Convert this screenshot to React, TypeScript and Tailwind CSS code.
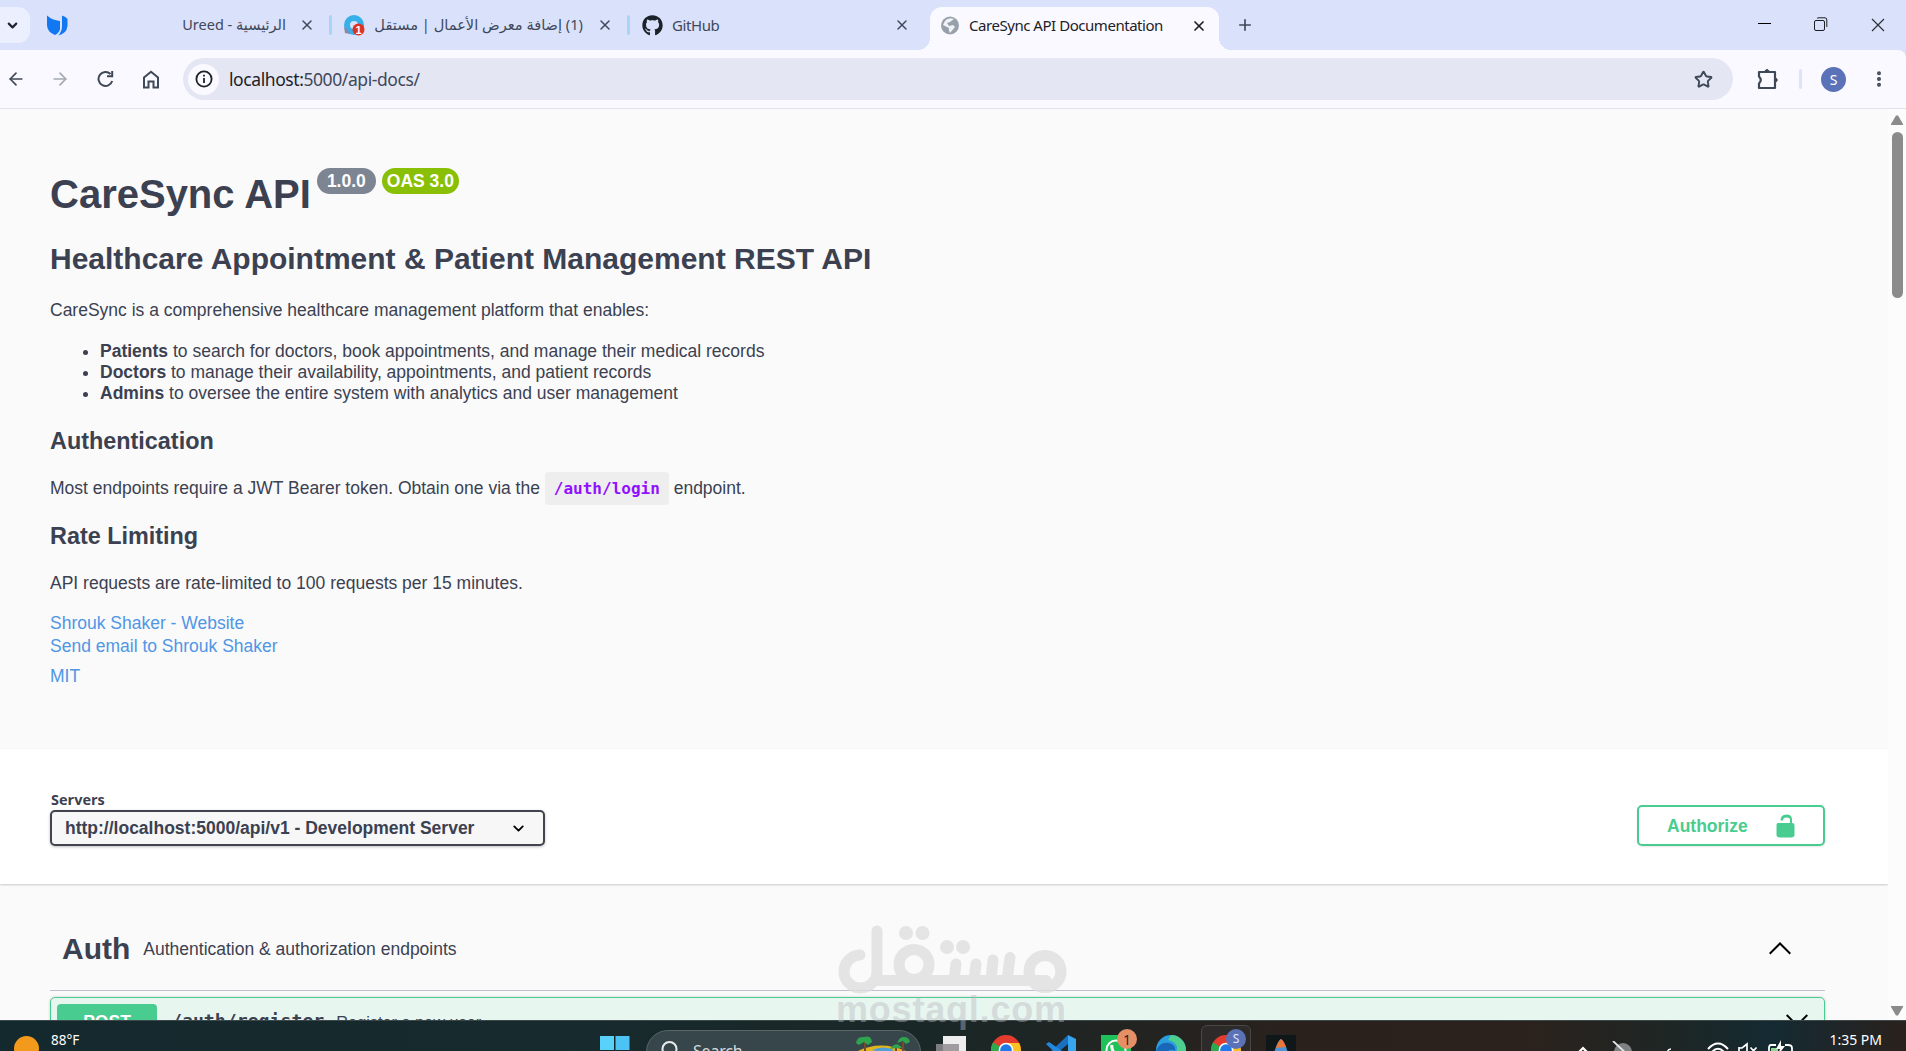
import { ReactNode } from "react";
import { FaGithub } from "react-icons/fa";
import {
  ArrowLeft,
  ArrowRight,
  ChevronDown,
  EllipsisVertical,
  Plus,
  Star,
  X,
} from "lucide-react";

const links = ["Shrouk Shaker - Website", "Send email to Shrouk Shaker"];

const features = [
  {
    role: "Patients",
    text: "to search for doctors, book appointments, and manage their medical records",
  },
  {
    role: "Doctors",
    text: "to manage their availability, appointments, and patient records",
  },
  {
    role: "Admins",
    text: "to oversee the entire system with analytics and user management",
  },
];

function TabDivider() {
  return <span className="h-5 w-[3px] rounded-full bg-[#a8d5f7]" />;
}

function TabStrip() {
  return (
    <div className="flex h-[50px] bg-[#dae1fa] font-['Noto_Sans','DejaVu_Sans',sans-serif] text-[15px] text-[#40485a]">
      <div className="mt-[7px] flex h-[36px] w-[30px] items-center rounded-r-xl bg-[#eceffd] pl-[5px]">
        <ChevronDown size={15} strokeWidth={3.4} className="text-[#1c2530]" />
      </div>
      <div className="flex h-[50px] w-[299px] items-center pl-[17px]">
        <svg width="21" height="21" viewBox="0 0 21 21">
          <path d="M0 0.500 Q5 5 13 6 V14 Q12 18 8 20 Q0 17 0 10Z" fill="#1178f2" />
          <path d="M15 0.500 Q19 1.500 20.500 4 V11 Q19.500 19 11 20.500 Q15 17 15 11Z" fill="#1178f2" />
        </svg>
        <p dir="rtl" className="ml-auto text-[14.500px] whitespace-nowrap">
          الرئيسية - Ureed
        </p>
        <X size={16} strokeWidth={2.2} className="mr-[14px] ml-[13px]" />
      </div>
      <div className="flex h-[50px] w-[298px] items-center">
        <TabDivider />
        <svg width="21" height="21" viewBox="0 0 21 21" className="ml-[12px]">
          <circle cx="10" cy="10" r="7" fill="none" stroke="#35b0e8" strokeWidth="6" />
          <path d="M0 12 L3 14 L6 19 L1 18Z" fill="#8d86a8" />
          <circle cx="14.500" cy="14.500" r="6" fill="#dd3325" />
          <text x="14.500" y="18.500" textAnchor="middle" fontSize="11" fontWeight="700" fill="#fff" fontFamily="Liberation Sans">1</text>
        </svg>
        <p dir="rtl" className="ml-auto text-[14.600px] whitespace-nowrap">
          (1) إضافة معرض الأعمال | مستقل
        </p>
        <X size={16} strokeWidth={2.2} className="mr-[14px] ml-[14px]" />
      </div>
      <div className="flex h-[50px] w-[303px] items-center">
        <TabDivider />
        <FaGithub size={21} className="ml-[12px] text-[#1b2229]" />
        <span className="ml-[9px] tracking-[-0.4px]">GitHub</span>
        <X size={16} strokeWidth={2.2} className="mr-[20px] ml-auto" />
      </div>
      <div className="relative mt-[7px] flex h-[43px] w-[289px] items-center rounded-t-xl bg-[#faf9ff] pb-[6px] text-[#1c2128]">
        <svg width="18" height="19" viewBox="0 0 18 19" className="ml-[11px]">
          <circle cx="9" cy="9.500" r="9" fill="#98a1ab" />
          <path d="M4 5 Q7 1 13 3 L9 6 L6 7 L8 10 L12 9 L14 11 L9 17 Q7 14 8 12 L2 9Z" fill="#f0f2f6" />
        </svg>
        <span className="ml-[10px] tracking-[-0.460px] whitespace-nowrap">CareSync API Documentation</span>
        <X size={16} strokeWidth={2.6} className="mr-[12px] ml-auto" />
        <span className="absolute bottom-0 -left-3 size-3 bg-[radial-gradient(circle_at_0_0,#dae1fa_12px,#faf9ff_12px)]" />
        <span className="absolute -right-3 bottom-0 size-3 bg-[radial-gradient(circle_at_100%_0,#dae1fa_12px,#faf9ff_12px)]" />
      </div>
      <Plus size={18} strokeWidth={2.2} className="mt-[16px] ml-[17px]" />
      <div className="ml-auto flex items-start pt-[17px] pr-[21px] text-black">
        <span className="mt-[6px] h-px w-[13px] bg-black" />
        <svg width="14" height="14" viewBox="0 0 14 14" className="ml-[43px]" fill="none" stroke="#1b1f24">
          <rect x="0.500" y="3.500" width="10" height="10" rx="1.500" />
          <path d="M3 1.500 Q3.500 0.800 5 0.800 H11 Q12.800 0.800 12.800 3 V10" />
        </svg>
        <svg width="14" height="14" viewBox="0 0 14 14" className="mt-px ml-[43px]" stroke="#2b3138" strokeWidth="1.200">
          <path d="M1 1 L13 13 M13 1 L1 13" />
        </svg>
      </div>
    </div>
  );
}

function AddressBar() {
  return (
    <div className="bg-[#dae1fa]">
      <div className="flex h-[59px] items-center rounded-tr-lg border-b border-[#e1e2ea] bg-[#faf9ff] text-[#3f4856]">
        <ArrowLeft size={20} strokeWidth={2} className="ml-[6px]" />
        <ArrowRight size={20} strokeWidth={2} className="ml-[24px] text-[#a3a8b1]" />
        <svg width="18" height="18" viewBox="0 0 18 18" className="ml-[27px]" fill="none" stroke="currentColor" strokeWidth="2">
          <path d="M15.200 11 A7 7 0 1 1 13.500 4 M15.200 1 V6.300 H10" />
        </svg>
        <svg width="18" height="19" viewBox="0 0 18 19" className="ml-[27px]" fill="none" stroke="currentColor" strokeWidth="2">
          <path d="M2 7.500 L9 1.800 L16 7.500 V17.500 H11.500 V11.500 H6.500 V17.500 H2Z" />
        </svg>
        <div className="ml-[23px] flex h-[42px] w-[1550px] items-center rounded-full bg-[#e4e7f3] pr-[20px] pl-[5px]">
          <span className="flex size-[31px] items-center justify-center rounded-full bg-[#faf9ff]">
            <svg width="18" height="18" viewBox="0 0 18 18" fill="none" stroke="#1c2128" strokeWidth="1.800">
              <circle cx="9" cy="9" r="7.600" />
              <path d="M9 8 V13 M9 4.700 V6.500" />
            </svg>
          </span>
          <span className="ml-[10px] font-['Noto_Sans',sans-serif] text-[17.500px] tracking-[-0.42px] text-[#40485a]">
            <span className="text-[#1c2128]">localhost:</span>5000/api-docs/
          </span>
          <Star size={19} strokeWidth={2.4} strokeLinejoin="miter" className="ml-auto" />
        </div>
        <svg width="22" height="22" viewBox="0 0 22 22" className="ml-[24px]" fill="none" stroke="currentColor" strokeWidth="2.200">
          <path d="M2 4 H18 V20 H2 V15.500 Q5.500 12 2 8.500Z" strokeLinejoin="round" />
          <path d="M7.500 3.500 Q10 -0.500 12.500 3.500Z M18.500 9.500 Q22 12 18.500 14.500Z" fill="currentColor" strokeWidth="1" />
        </svg>
        <span className="ml-[20px] h-5 w-[3px] rounded-full bg-[#dae4fb]" />
        <span className="ml-[19px] flex size-[25px] items-center justify-center rounded-full bg-[#5b72b9] font-['Noto_Sans',sans-serif] text-[14px] text-white">
          S
        </span>
        <EllipsisVertical size={20} strokeWidth={2.8} className="ml-[23px]" />
      </div>
    </div>
  );
}

function SectionHeading({ children }: { children: ReactNode }) {
  return <h3 className="text-[23.400px] leading-[28px] font-bold">{children}</h3>;
}

function Info() {
  return (
    <section className="h-[640px] px-[50px] pt-[62px] text-[17.500px] leading-[21px]">
      <div className="flex h-[46px]">
        <h1 className="text-[40px] leading-[46px] font-bold whitespace-nowrap">CareSync API</h1>
        <span className="-mt-[3px] ml-[6px] flex h-[26px] w-[59px] items-center justify-center rounded-full bg-[#7d8492] text-[17.500px] font-bold text-white">
          1.0.0
        </span>
        <span className="-mt-[3px] ml-[6px] flex h-[26px] w-[77px] items-center justify-center rounded-full bg-[#89bf04] text-[17.500px] font-bold text-white">
          OAS 3.0
        </span>
      </div>
      <h2 className="mt-[25px] text-[30px] leading-[34px] font-bold">
        Healthcare Appointment &amp; Patient Management REST API
      </h2>
      <p className="mt-[24px]">
        CareSync is a comprehensive healthcare management platform that enables:
      </p>
      <ul className="mt-[20px] mb-[23px] list-disc pl-[50px]">
        {features.map(({ role, text }) => (
          <li key={role}>
            <strong>{role}</strong> {text}
          </li>
        ))}
      </ul>
      <SectionHeading>Authentication</SectionHeading>
      <p className="mt-[23px] mb-[23px]">
        Most endpoints require a JWT Bearer token. Obtain one via the{" "}
        <code className="rounded bg-[#eeeeee] px-[9px] py-[7px] font-['DejaVu_Sans_Mono',monospace] text-[16px] font-bold text-[#9012fe]">
          /auth/login
        </code>{" "}
        endpoint.
      </p>
      <SectionHeading>Rate Limiting</SectionHeading>
      <p className="mt-[23px]">API requests are rate-limited to 100 requests per 15 minutes.</p>
      <div className="mt-[18px] leading-[23px] text-[#5096e4]">
        {links.map((link) => (
          <a key={link} className="block">
            {link}
          </a>
        ))}
        <a className="mt-[7px] block">MIT</a>
      </div>
    </section>
  );
}

function Servers() {
  return (
    <section className="flex h-[135px] justify-between bg-white pr-[63px] pl-[50px] shadow-[0_1px_2px_rgba(0,0,0,0.2)]">
      <div className="pt-[41px]">
        <p className="h-[20px] pl-px font-['Open_Sans',sans-serif] text-[14.500px] leading-[20px] font-bold">Servers</p>
        <div className="flex h-[36px] w-[495px] items-center rounded-[5px] border-2 border-[#41444e] bg-[#f7f7f7] pr-[16px] pl-[13px] text-[17.500px] font-bold shadow-[0_1px_3px_rgba(0,0,0,0.25)]">
          http://localhost:5000/api/v1 - Development Server
          <ChevronDown size={17} strokeWidth={2.6} className="ml-auto text-black" />
        </div>
      </div>
      <button className="mt-[56px] flex h-[41px] w-[188px] items-center rounded-[5px] border-2 border-[#49cc90] pl-[28px] text-[17.500px] font-bold text-[#49cc90] shadow-[0_1px_2px_rgba(0,0,0,0.1)]">
        <span className="pt-px">Authorize</span>
        <svg width="19" height="24" viewBox="0 0 19 24" className="ml-[28px]" fill="#49cc90">
          <path d="M2 9 H14 V5.500 Q14 3.500 10.500 3.500 Q7 3.500 7 6.500 H4.500 Q4.500 0.500 10.500 0.500 Q16 0.500 16 5.500 V9 Q18.500 9 18.500 11 V21 Q18.500 23 15 23.500 H4 Q0.500 23 0.500 21 V11 Q0.500 9 2 9Z" />
        </svg>
      </button>
    </section>
  );
}

function Operations() {
  return (
    <section className="pr-[63px] pl-[50px]">
      <div className="flex h-[107px] items-center border-b border-[#c0c0cb] pt-[22px] pr-[34px] pl-[12px]">
        <h3 className="text-[30px] font-bold">Auth</h3>
        <p className="ml-[13px] pt-[2px] text-[17.500px]">Authentication &amp; authorization endpoints</p>
        <svg width="22" height="13" viewBox="0 0 22 13" className="ml-auto" fill="none" stroke="#000" strokeWidth="2">
          <path d="M0.700 11.700 L11 1.500 L21.300 11.700" />
        </svg>
      </div>
      <div className="mt-[6px] flex h-[50px] items-start rounded-[5px] border border-[#49cc90] bg-[#e8f6f0] px-[6px] pt-[6px] shadow-[0_0_3px_rgba(0,0,0,0.19)]">
        <span className="flex h-[38px] w-[100px] items-center justify-center rounded-[4px] bg-[#49cc90] pb-[2px] text-[17.500px] font-bold text-white">
          POST
        </span>
        <span className="ml-[14px] font-['DejaVu_Sans_Mono',monospace] text-[18.200px] leading-[34px] font-bold">/auth/register</span>
        <span className="ml-[12px] text-[16.300px] leading-[36px]">Register a new user</span>
        <svg width="22" height="13" viewBox="0 0 22 13" className="mt-[10px] mr-[10px] ml-auto" fill="none" stroke="#000" strokeWidth="2">
          <path d="M0.700 1 L11 11.300 L21.300 1" />
        </svg>
      </div>
    </section>
  );
}

function Watermark() {
  return (
    <svg width="232" height="110" viewBox="0 0 232 110" className="absolute top-[923px] left-[836px] z-10 opacity-80">
      <g fill="none" stroke="#dfdfdf" strokeWidth="11" strokeLinecap="round" strokeLinejoin="round">
        <path d="M24 32 A16.500 16.500 0 1 0 41 49 V8 M41 57.500 H210" />
        <circle cx="78" cy="41.500" r="15" />
        <circle cx="209" cy="48.500" r="16" />
        <path d="M120 41 L118 57 M140 41 L138 57 M157 37 L155 57 M174 34.500 L171 57" />
      </g>
      <g fill="#dfdfdf">
        <circle cx="70" cy="10" r="7" />
        <circle cx="86.500" cy="10" r="7" />
        <circle cx="111" cy="24" r="7" />
        <circle cx="127" cy="24" r="7" />
      </g>
      <text x="0" y="99" textLength="230" fontSize="36" fontWeight="700" fontFamily="Liberation Sans" fill="#b9b9c2" fillOpacity="0.55">
        mostaql.com
      </text>
    </svg>
  );
}

function ChromeIcon() {
  return (
    <svg width="30" height="30" viewBox="0 0 30 30">
      <circle cx="15" cy="15" r="15" fill="#e33b2e" />
      <path d="M15 15 L2 7.500 A15 15 0 0 0 15 30Z" fill="#2da94f" />
      <path d="M15 15 V8 H28.200 A15 15 0 0 1 15 30Z" fill="#f9c31f" />
      <circle cx="15" cy="15" r="7.300" fill="#fff" />
      <circle cx="15" cy="15" r="5.800" fill="#2079e8" />
    </svg>
  );
}

function Taskbar() {
  return (
    <footer className="flex h-[31px] items-start overflow-hidden border-t border-[#3c484a] bg-[linear-gradient(90deg,#14292e_0,#172a2d_30%,#1a2726_50%,#2a211d_68%,#2b221d_80%,#1d2625_88%,#142a32_93%,#2a211d_100%)] font-['Noto_Sans',sans-serif] text-white">
      <svg width="25" height="25" viewBox="0 0 25 25" className="mt-[15px] ml-[14px]">
        <circle cx="12.500" cy="12.500" r="12.500" fill="#f39a1c" />
      </svg>
      <span className="mt-[10px] ml-[12px] w-[40px] text-[13.500px] leading-[18px]">88°F</span>
      <svg width="30" height="30" viewBox="0 0 30 30" className="mt-[15px] ml-[509px]" fill="#58d2fa">
        <path d="M0 0 H14 V14 H0Z" />
        <path d="M15.500 0 H29.500 V14 H15.500Z" fill="#4cc2f5" />
      </svg>
      <div className="mt-[9px] ml-[16px] flex h-[46px] w-[275px] rounded-[22px] border border-[#5a6668] bg-[#36464b]">
        <svg width="17" height="17" viewBox="0 0 17 17" className="mt-[10px] ml-[14px]" fill="none" stroke="#e9eced" strokeWidth="2">
          <circle cx="8.500" cy="8" r="7" />
        </svg>
        <span className="mt-[8px] ml-[15px] text-[16px] leading-[24px] tracking-[-0.2px] text-[#d4d9da]">Search</span>
        <svg width="60" height="30" viewBox="0 0 60 30" className="mt-[5px] ml-auto mr-[6px]">
          <path d="M2 16 Q28 2 58 18 V30 H2Z" fill="#e2b520" />
          <path d="M18 14 Q30 9 40 14 Q34 18 18 14Z" fill="#4d9fd6" />
          <path d="M11 6 V18 M49 6 V18 M42 12 V20" stroke="#7a4a28" strokeWidth="2" />
          <path d="M2 7 Q3 0 10 1 Q17 -1 18 6 L14 9 L10 6 L5 9Z M43 7 Q46 0 50 1 Q55 1 56 6 L52 8 L49 5Z M36 13 Q42 4 48 12 L42 12Z" fill="#2fa34d" />
        </svg>
      </div>
      <svg width="30" height="20" viewBox="0 0 30 20" className="mt-[15px] ml-[15px]">
        <path d="M7 0 H30 V20 H7Z" fill="#ededee" />
        <path d="M0 8 H23 V20 H0Z" fill="#8f8d90" fillOpacity="0.85" />
      </svg>
      <div className="mt-[14px] ml-[25px]">
        <ChromeIcon />
      </div>
      <svg width="30" height="30" viewBox="0 0 30 30" className="mt-[14px] ml-[25px]">
        <path d="M22 0 L30 4 V26 L22 30Z" fill="#37a6ee" />
        <path d="M22 0 V9 L4 24 L0 21Z" fill="#1a70c0" />
        <path d="M0 9 L3 7 L22 20 V30Z" fill="#2388de" />
      </svg>
      <div className="relative mt-[14px] ml-[25px] size-[30px] bg-[#1fc15b]">
        <svg width="30" height="30" viewBox="0 0 30 30" fill="none" stroke="#fff" strokeWidth="2">
          <circle cx="15" cy="15" r="9.500" />
          <path d="M11 10 Q10 14 14 19" strokeWidth="3" />
        </svg>
        <span className="absolute -top-[6px] left-[16px] flex size-[20px] items-center justify-center rounded-full bg-[#e58f66] text-[14px] text-[#33211b]">1</span>
      </div>
      <svg width="30" height="30" viewBox="0 0 30 30" className="mt-[14px] ml-[25px]">
        <circle cx="15" cy="15" r="15" fill="#2b9ee0" />
        <path d="M15 0 A15 15 0 0 1 30 15 Q29 20 20 18 Q24 8 12 5Z" fill="#4ccf8f" />
        <path d="M0 16 Q4 6 13 8 Q20 10 19 16 Q13 12 10 20Z" fill="#1a66b8" />
      </svg>
      <div className="relative mt-[4px] ml-[15px] h-[50px] w-[50px] rounded-md border border-[#4a4745] bg-[#2c2b2a] pt-[9px] pl-[9px]">
        <ChromeIcon />
        <span className="absolute top-[3px] left-[24px] flex size-[20px] items-center justify-center rounded-full bg-[#5b72b9] text-[12px] text-[#dfe5fa]">S</span>
      </div>
      <div className="mt-[14px] ml-[15px] flex size-[30px] justify-center bg-[#101719] pt-[4px]">
        <svg width="14" height="24" viewBox="0 0 14 24">
          <path d="M7 0 Q11 3 14 14 V24 H0 V14 Q3 3 7 0Z" fill="#4a93d6" />
          <path d="M7 0 Q10 2 12 8 L2 9 Q4 2 7 0Z" fill="#e9763b" />
        </svg>
      </div>
      <div className="ml-auto flex items-start pr-[24px]">
        <svg width="18" height="10" viewBox="0 0 18 10" className="mt-[25px]" fill="none" stroke="#fff" strokeWidth="2.200">
          <path d="M2 9 L9 2 L16 9" />
        </svg>
        <svg width="24" height="16" viewBox="0 0 24 16" className="mt-[20px] ml-[20px]">
          <circle cx="11" cy="11" r="9" fill="#7d8182" />
          <path d="M1 0 L18 16" stroke="#e5e7e8" strokeWidth="1.800" />
        </svg>
        <svg width="10" height="8" viewBox="0 0 10 8" className="mt-[26px] ml-[29px]" fill="none" stroke="#fff" strokeWidth="1.500">
          <path d="M2 8 Q2 2 6 2" />
        </svg>
        <svg width="22" height="16" viewBox="0 0 22 16" className="mt-[21px] ml-[32px]" fill="none" stroke="#fff" strokeWidth="2">
          <path d="M1 7 Q11 -4 21 7 M4.500 10.500 Q11 3 17.500 10.500 M8 14 Q11 10 14 14" />
        </svg>
        <svg width="20" height="16" viewBox="0 0 20 16" className="mt-[21px] ml-[9px]" fill="none" stroke="#fff" strokeWidth="1.700">
          <path d="M1 6 H4 L9 2 V16 M1 5 V13 M12.500 5.500 L18.500 12 M18.500 5.500 L12.500 12" />
        </svg>
        <svg width="26" height="18" viewBox="0 0 26 18" className="mt-[19px] ml-[10px]" fill="none" stroke="#fff" strokeWidth="1.800">
          <path d="M8 5 H3 Q1 5 1 8 V18 M17 5 H20 Q24 5 24 8 V18" />
          <path d="M3 8 H10 V18 H3Z" fill="#8fd68d" stroke="none" />
          <path d="M13 0 L8 9 H12 L10 15 L17 6 H13Z" fill="#fff" stroke="none" />
        </svg>
        <span className="mt-[10px] ml-[35px] text-[14px] leading-[18px] whitespace-nowrap">1:35 PM</span>
      </div>
    </footer>
  );
}

export default function App() {
  return (
    <div className="relative flex h-[1051px] w-[1906px] flex-col overflow-hidden bg-[#fafafa] font-['Liberation_Sans',Arial,sans-serif] text-[#3b4151]">
      <TabStrip />
      <AddressBar />
      <div className="flex h-[911px] overflow-hidden">
        <main className="w-[1888px]">
          <Info />
          <Servers />
          <Operations />
        </main>
        <aside className="z-10 flex w-[18px] flex-col items-center bg-[#fcfcfc] pt-[6px] pb-[4px]">
          <svg width="12" height="10" viewBox="0 0 12 10" fill="#8b8b8b">
            <path d="M5 0.500 H7 L12 9 V10 H0 V9Z" />
          </svg>
          <div className="mt-[7px] h-[166px] w-[11px] rounded-full bg-[#8b8b8b]" />
          <svg width="12" height="10" viewBox="0 0 12 10" fill="#8b8b8b" className="mt-auto">
            <path d="M0 0 H12 V1 L7 9.500 H5 L0 1Z" />
          </svg>
        </aside>
      </div>
      <Taskbar />
      <Watermark />
    </div>
  );
}
